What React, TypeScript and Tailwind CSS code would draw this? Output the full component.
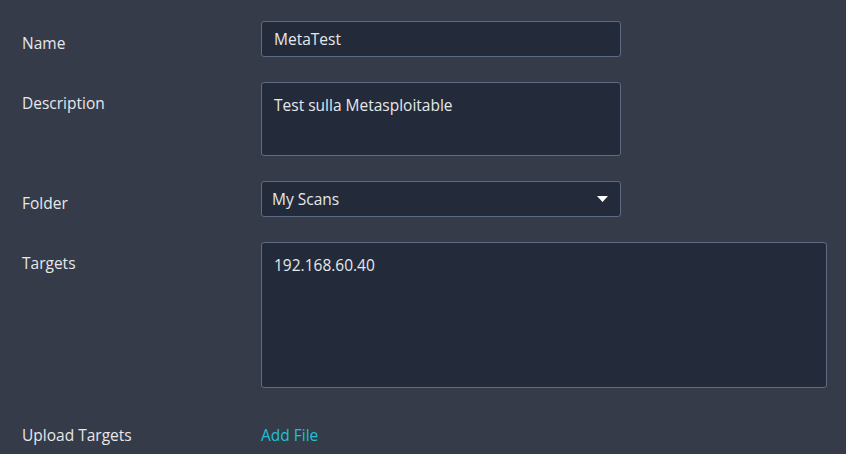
import React from "react";

const font = { fontFamily: '"Open Sans", "Noto Sans", sans-serif' };

export default function App() {
  return (
    <div className="w-[846px] h-[454px] bg-[#353b48] text-[#e6e8eb] text-[15.5px] leading-[20px] pt-[21px] overflow-hidden" style={font}>
      <div className="flex">
        <div className="w-[261px] pl-[22px] pt-[12px]">Name</div>
        <div className="w-[360px] h-[36px] rounded-[3px] border border-[#5d6c84] bg-[#232b3a] pl-[12px] flex items-center">MetaTest</div>
      </div>
      <div className="flex mt-[25px]">
        <div className="w-[261px] pl-[22px] pt-[11px]">Description</div>
        <div className="w-[360px] h-[74px] rounded-[3px] border border-[#5d6c84] bg-[#232b3a] pl-[12px] pt-[12px]">Test sulla Metasploitable</div>
      </div>
      <div className="flex mt-[25px]">
        <div className="w-[261px] pl-[22px] pt-[12px]">Folder</div>
        <div className="w-[360px] h-[36px] rounded-[3px] border border-[#5d6c84] bg-[#232b3a] pl-[10px] pr-[12px] flex items-center justify-between">
          <span>My Scans</span>
          <svg width="11" height="6" viewBox="0 0 11 6"><path d="M0 0 H11 L5.5 6 Z" fill="#ffffff" /></svg>
        </div>
      </div>
      <div className="flex mt-[25px]">
        <div className="w-[261px] pl-[22px] pt-[11px]">Targets</div>
        <div className="w-[566px] h-[146px] rounded-[3px] border border-[#5d6c84] bg-[#232b3a] pl-[12px] pt-[12px]">192.168.60.40</div>
      </div>
      <div className="flex mt-[37px]">
        <div className="w-[261px] pl-[22px]">Upload Targets</div>
        <div className="text-[#1fc0d6]">Add File</div>
      </div>
    </div>
  );
}
